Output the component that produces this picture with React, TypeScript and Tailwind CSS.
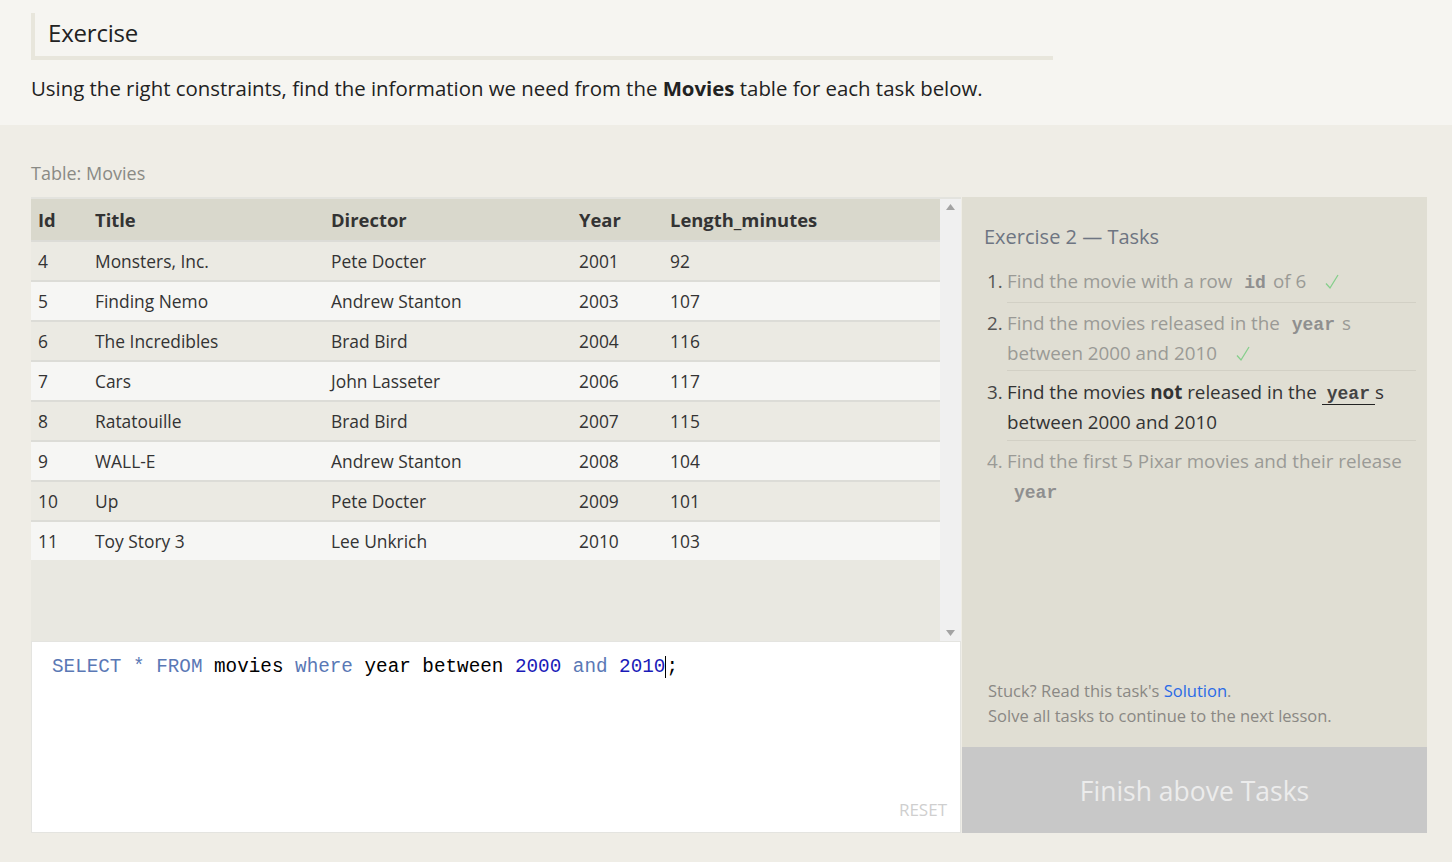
import React from "react";

const rows = [
  ["4", "Monsters, Inc.", "Pete Docter", "2001", "92"],
  ["5", "Finding Nemo", "Andrew Stanton", "2003", "107"],
  ["6", "The Incredibles", "Brad Bird", "2004", "116"],
  ["7", "Cars", "John Lasseter", "2006", "117"],
  ["8", "Ratatouille", "Brad Bird", "2007", "115"],
  ["9", "WALL-E", "Andrew Stanton", "2008", "104"],
  ["10", "Up", "Pete Docter", "2009", "101"],
  ["11", "Toy Story 3", "Lee Unkrich", "2010", "103"],
];

const Code = ({ children, muted }: { children: React.ReactNode; muted?: boolean }) => (
  <code
    className={
      "px-[7px] font-bold text-[18px] leading-none font-['Liberation_Mono',monospace] " +
      (muted ? "text-[#8f8f8f]" : "text-[#333]")
    }
  >
    {children}
  </code>
);

const Check = () => (
  <svg className="ml-[14px] inline-block align-[-2px]" width="14" height="16" viewBox="0 0 14 16">
    <path d="M1 9.5 L5 14 L13 1" fill="none" stroke="#86cf8c" strokeWidth="1.3" />
  </svg>
);

const Row = ({ cells, odd }: { cells: string[]; odd: boolean }) => (
  <div
    className={
      "flex h-[40px] items-center border-t-2 border-[#dcdcd7] text-[17.4px] text-[#333] " +
      (odd ? "bg-[#ebeae3]" : "bg-[#f6f6f4]")
    }
  >
    <div className="w-[64px] pl-[7px]">{cells[0]}</div>
    <div className="w-[236px]">{cells[1]}</div>
    <div className="w-[248px]">{cells[2]}</div>
    <div className="w-[91px]">{cells[3]}</div>
    <div>{cells[4]}</div>
  </div>
);

export default function App() {
  return (
    <div className="min-h-screen bg-[#efede6] font-['Open_Sans','Noto_Sans',sans-serif] text-[#333]">
      <div className="bg-[#f6f5f1] px-[31px] pt-[13px] pb-[22px]">
        <div className="flex h-[47px] w-[1022px] items-center border-b-4 border-l-[4px] border-[#e8e6dc] pl-[13px] pb-[4px]">
          <h1 className="text-[24px] tracking-[-0.2px] text-[#222]">Exercise</h1>
        </div>
        <p className="mt-[13px] text-[20.4px] leading-[30px] text-[#222]">
          Using the right constraints, find the information we need from the <b>Movies</b> table for
          each task below.
        </p>
      </div>

      <div className="px-[31px] pt-[35px]">
        <div className="mb-[11px] text-[18px] leading-[26px] text-[#8a8a85]">Table: Movies</div>
        <div className="flex w-[1396px]">
          <div className="flex w-[930px] flex-col">
            <div className="flex h-[444px] border-t-2 border-[#e3e3de] bg-[#e9e8e1]">
              <div className="flex-1">
                <div className="flex h-[41px] items-center bg-[#d9d8cc] text-[18.4px] font-bold text-[#333]">
                  <div className="w-[64px] pl-[7px]">Id</div>
                  <div className="w-[236px]">Title</div>
                  <div className="w-[248px]">Director</div>
                  <div className="w-[91px]">Year</div>
                  <div>Length_minutes</div>
                </div>
                {rows.map((r, i) => (
                  <Row key={r[0]} cells={r} odd={i % 2 === 0} />
                ))}
              </div>
              <div className="flex w-[21px] flex-col items-center justify-between bg-[#f0f0f0] py-[5px]">
                <svg width="9" height="6" viewBox="0 0 9 6">
                  <path d="M4.5 0 L9 6 L0 6 Z" fill="#a3a3a3" />
                </svg>
                <svg width="9" height="6" viewBox="0 0 9 6">
                  <path d="M0 0 L9 0 L4.5 6 Z" fill="#a3a3a3" />
                </svg>
              </div>
            </div>
            <div className="relative h-[192px] border border-[#e4e4e0] bg-white px-[20px] pt-[11px]">
              <div className="font-['Liberation_Mono',monospace] text-[19.3px] leading-[28px]">
                <span className="text-[#5a78b5]">SELECT</span>{" "}
                <span className="text-[#5a78b5]">*</span>{" "}
                <span className="text-[#5a78b5]">FROM</span>{" "}
                <span className="text-black">movies</span>{" "}
                <span className="text-[#5a78b5]">where</span>{" "}
                <span className="text-black">year between</span>{" "}
                <span className="text-[#1a1ab8]">2000</span>{" "}
                <span className="text-[#5a78b5]">and</span>{" "}
                <span className="border-r-[1.5px] border-black text-[#1a1ab8]">2010</span>
                <span className="text-black">;</span>
              </div>
              <div className="absolute right-[13px] bottom-[10px] text-[17px] text-[#cfcfcf]">RESET</div>
            </div>
          </div>

          <div className="ml-[1px] flex w-[465px] flex-col bg-[#e0ded3]">
            <div className="flex flex-1 flex-col pl-[22px] pr-[11px] pt-[26px]">
              <div className="text-[20px] leading-[28px] text-[#6e7582]">Exercise 2 — Tasks</div>
              <ol className="mt-[15px] text-[18.8px] leading-[30px]">
                <li className="flex">
                  <span className="w-[23px] pl-[3px] text-[#555]">1.</span>
                  <span className="flex-1 border-b border-[#d2d0c5] pb-[6px] text-[#9a9a96]">
                    Find the movie with a row <Code muted>id</Code>of 6 <Check />
                  </span>
                </li>
                <li className="flex pt-[5px]">
                  <span className="w-[23px] pl-[3px] text-[#555]">2.</span>
                  <span className="flex-1 border-b border-[#d2d0c5] pb-[2px] text-[#9a9a96]">
                    Find the movies released in the <Code muted>year</Code>s
                    <br />
                    between 2000 and 2010 <Check />
                  </span>
                </li>
                <li className="flex pt-[6px]">
                  <span className="w-[23px] pl-[3px] text-[#444]">3.</span>
                  <span className="flex-1 border-b border-[#d2d0c5] pb-[3px] text-[#333]">
                    Find the movies <b>not</b> released in the{" "}
                    <code className="border-b-[1.5px] border-[#222] px-[5px] font-['Liberation_Mono',monospace] text-[18px] leading-none font-bold text-[#444]">
                      year
                    </code>
                    s
                    <br />
                    between 2000 and 2010
                  </span>
                </li>
                <li className="flex pt-[5px]">
                  <span className="w-[23px] pl-[3px] text-[#9a9a96]">4.</span>
                  <span className="flex-1 text-[#9a9a96]">
                    Find the first 5 Pixar movies and their release
                    <br />
                    <Code muted>year</Code>
                  </span>
                </li>
              </ol>
              <div className="mt-auto pb-[19px] pl-[4px] text-[16.5px] leading-[25px] text-[#8a8884]">
                Stuck? Read this task's <span className="text-[#2a6ae6]">Solution</span>.
                <br />
                Solve all tasks to continue to the next lesson.
              </div>
            </div>
            <div className="flex h-[86px] items-center justify-center bg-[#c8c8c8] pt-[3px] text-[26.5px] text-[#ececec]">
              Finish above Tasks
            </div>
          </div>
        </div>
      </div>
    </div>
  );
}
